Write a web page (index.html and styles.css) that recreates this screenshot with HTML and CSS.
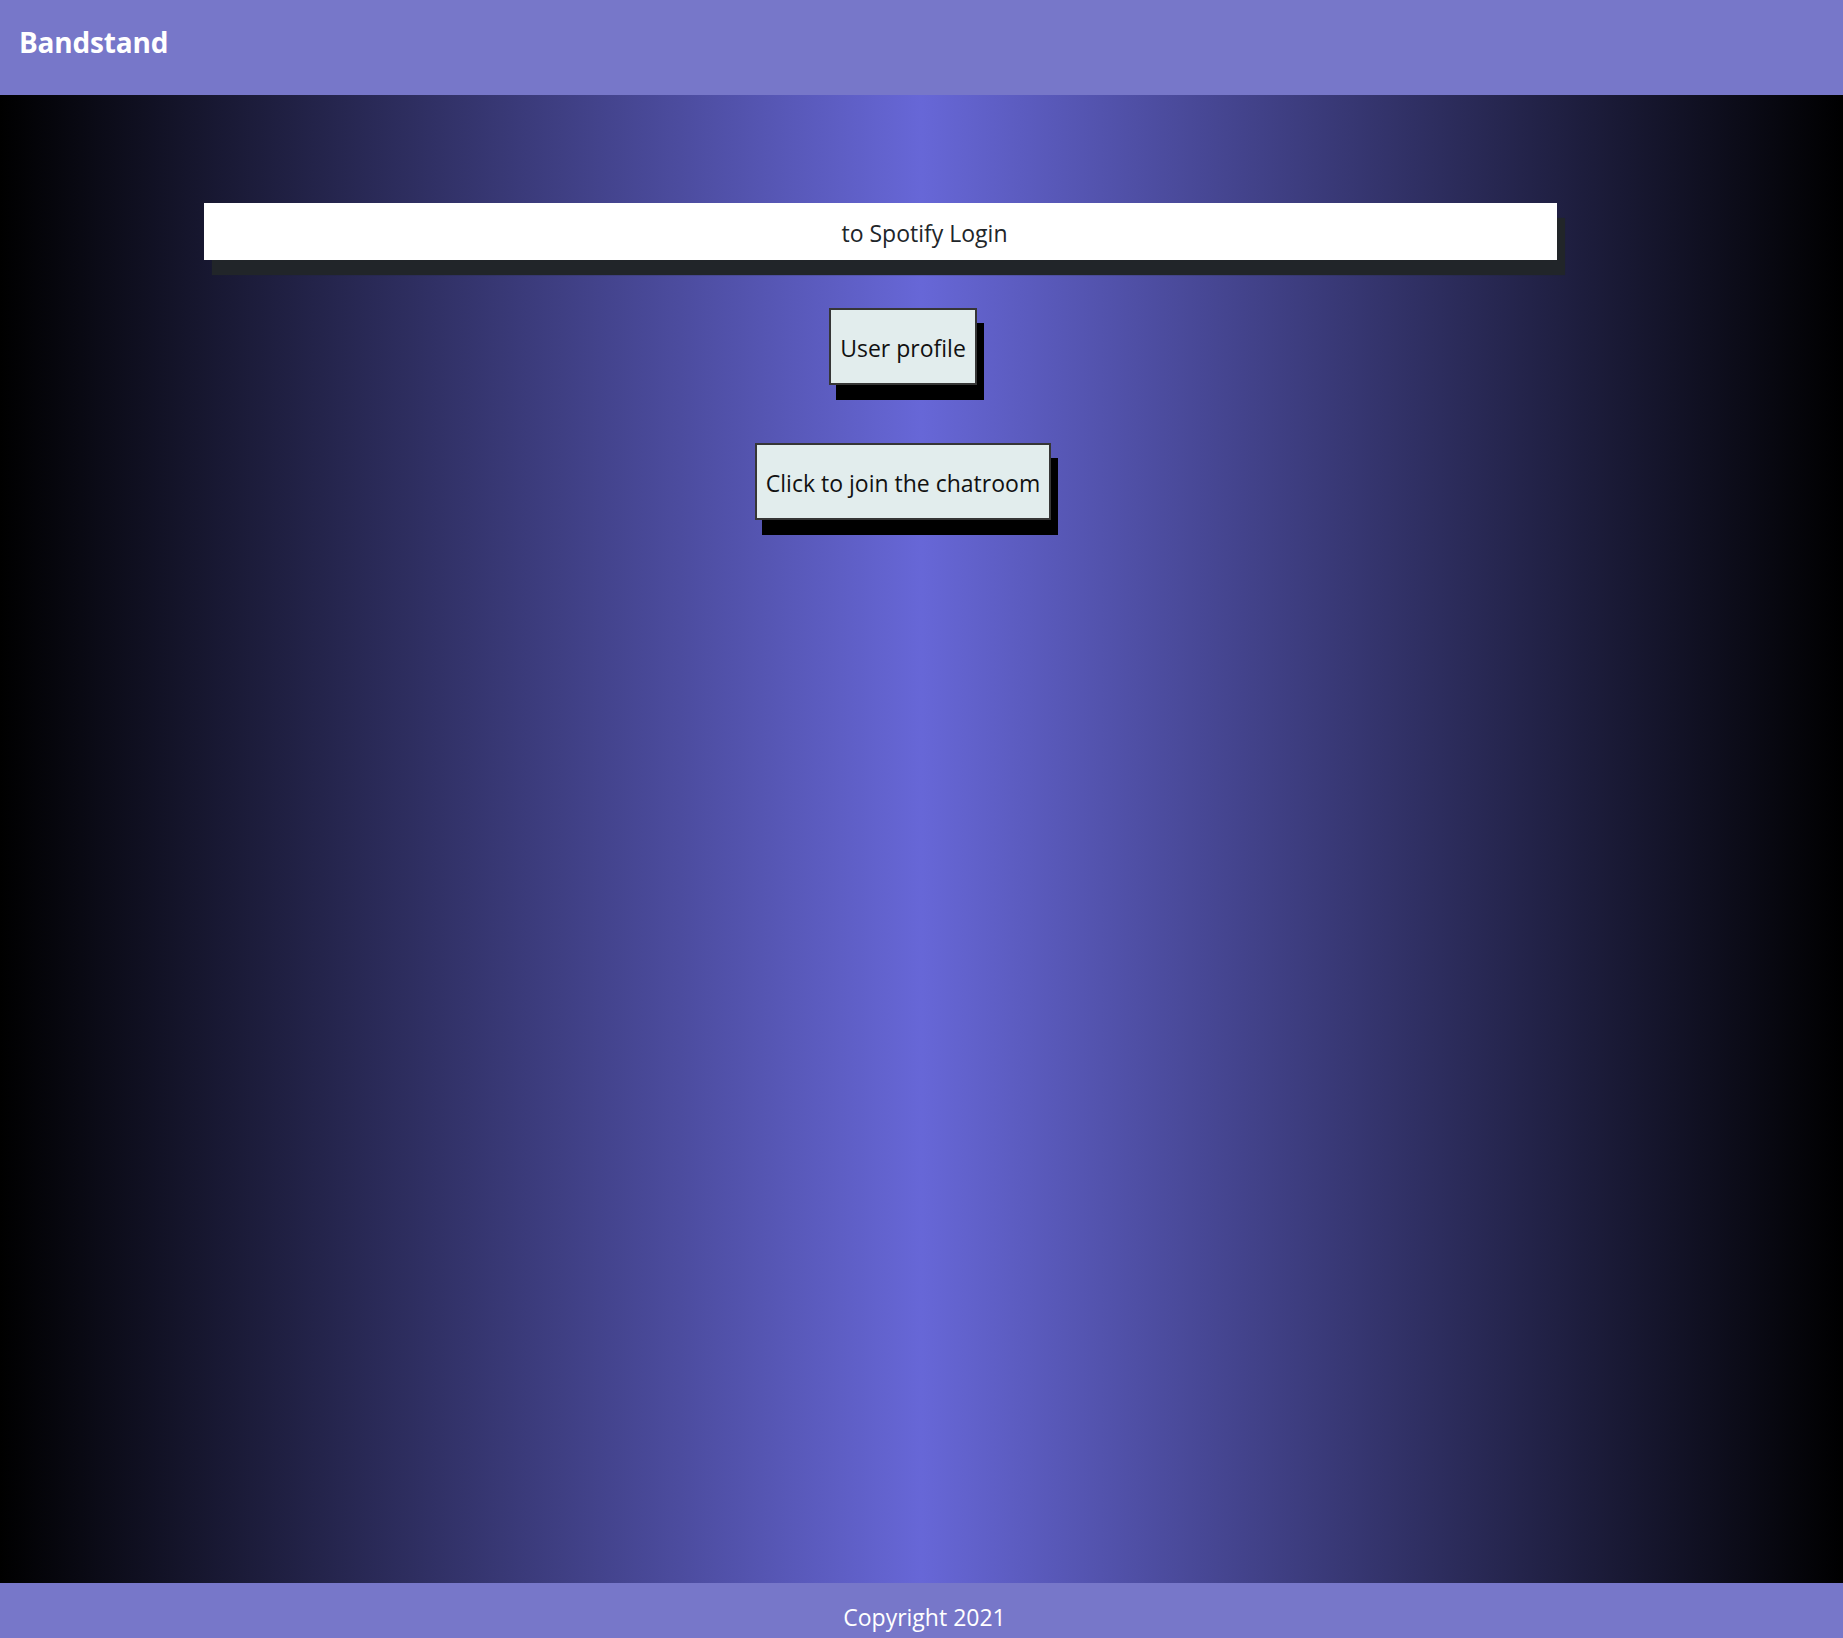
FILE: index.html
```html
<!DOCTYPE html>
<html lang="en">
<head>
<meta charset="utf-8">
<title>Bandstand</title>
<link rel="stylesheet" href="styles.css">
</head>
<body>
<header class="topbar">
  <span class="brand">Bandstand</span>
</header>
<main class="stage">
  <a class="login-bar" href="#">to Spotify Login</a>
  <div class="actions">
    <button class="btn" type="button">User profile</button>
    <button class="btn btn-chat" type="button">Click to join the chatroom</button>
  </div>
</main>
<footer class="bottombar">Copyright 2021</footer>
</body>
</html>
```

FILE: styles.css
```css
* { box-sizing: border-box; }

html, body {
  margin: 0;
  padding: 0;
}

body {
  font-family: "Open Sans", "Noto Sans", "DejaVu Sans", sans-serif;
  color: #212529;
  width: 1843px;
  min-height: 1638px;
  display: flex;
  flex-direction: column;
}

.topbar {
  height: 95px;
  background: #7777c9;
  padding: 22px 0 0 19px;
}

.brand {
  color: #ffffff;
  font-weight: 700;
  font-size: 28px;
  line-height: 40px;
  letter-spacing: -0.2px;
}

.stage {
  flex: 1;
  background: linear-gradient(to right, #000000 0%, #6767d7 50%, #000000 100%);
  padding-top: 108px;
  display: flex;
  flex-direction: column;
}

.login-bar {
  display: block;
  margin-left: 204px;
  width: 1353px;
  height: 57px;
  background: #ffffff;
  color: #212529;
  text-decoration: none;
  font-size: 23px;
  line-height: 57px;
  text-align: center;
  padding-left: 88px;
  padding-top: 2px;
  box-shadow: 8px 15px 1px #212529;
}

.actions {
  display: flex;
  flex-direction: column;
  align-items: center;
  padding-right: 37px;
  padding-top: 48px;
  gap: 58px;
}

.btn {
  font-family: "Open Sans", "Noto Sans", "DejaVu Sans", sans-serif;
  font-size: 23px;
  color: #111111;
  background: #e2eded;
  border: 2px solid #363636;
  height: 77px;
  padding: 2px 9px 0;
  box-shadow: 7px 15px 0 #000000;
  cursor: pointer;
}

.bottombar {
  height: 55px;
  background: #7777c9;
  color: #ffffff;
  text-align: center;
  font-size: 23px;
  line-height: 30px;
  padding-top: 19px;
  padding-left: 6px;
}
```
